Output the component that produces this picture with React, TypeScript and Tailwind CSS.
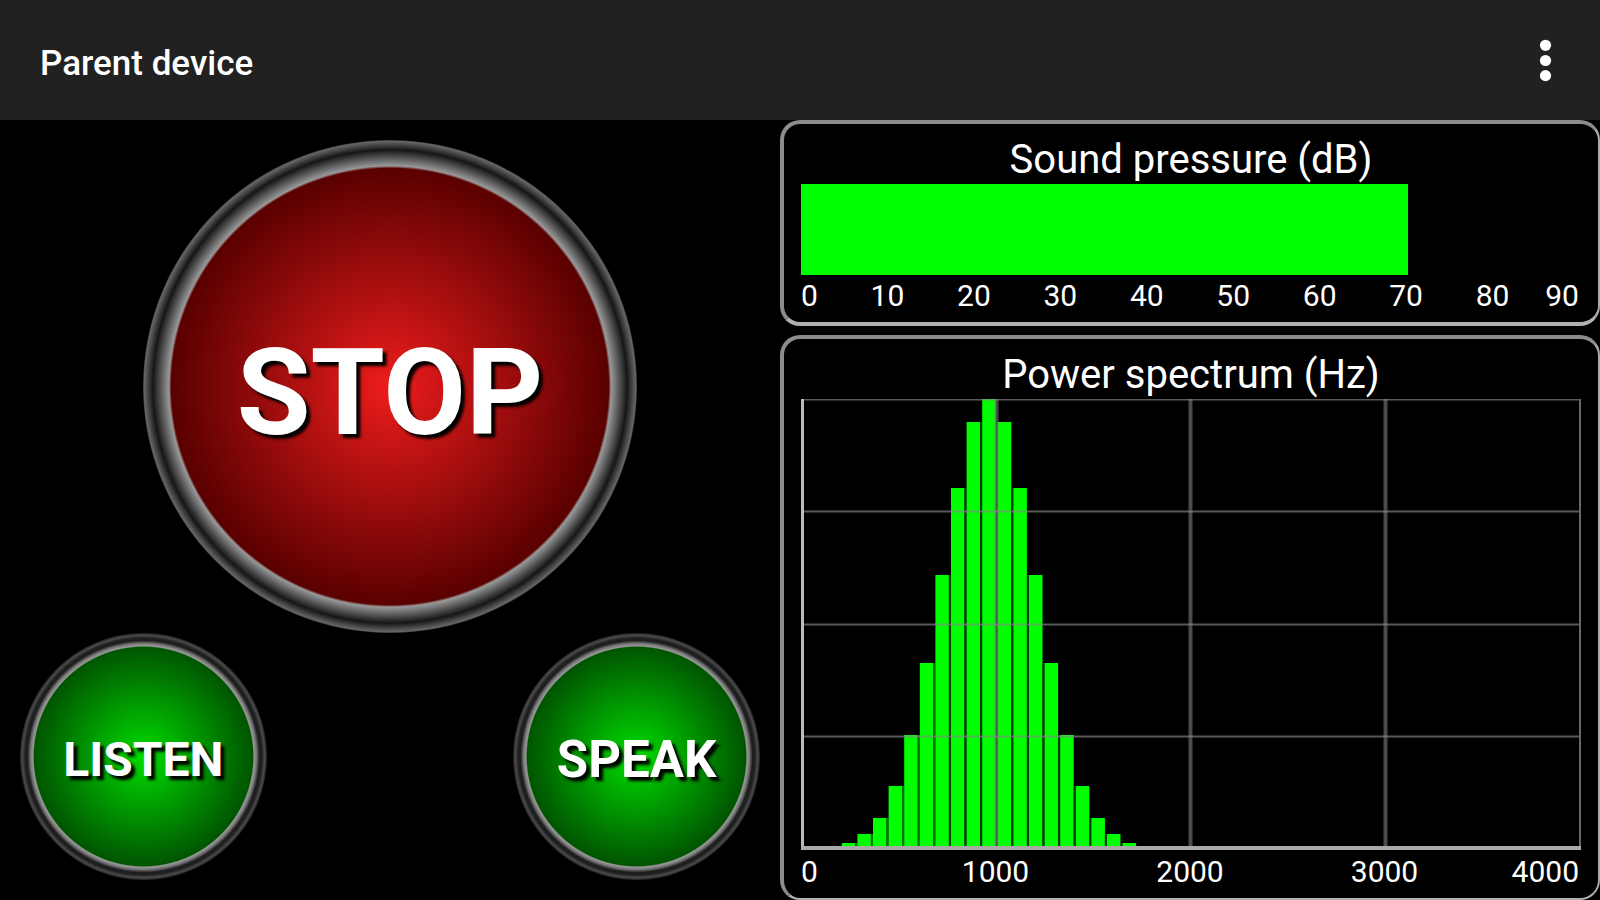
import clsx from 'clsx';

type RoundButtonProps = {
  label: string;
  color: 'red' | 'green';
  textStyle: string;
};

type ScaleProps = {
  values: number[];
};

const soundLevel = 70;
const maxSoundLevel = 90;
const soundScale = [0, 10, 20, 30, 40, 50, 60, 70, 80, 90];
const frequencyScale = [0, 1000, 2000, 3000, 4000];

// Height of each frequency bin, starting at the third one
const firstBin = 3;
const spectrum = [6, 15, 31, 63, 114, 186, 274, 361, 427, 451, 427, 361, 274, 186, 114, 63, 31, 15, 6];

const chartWidth = 780;
const chartHeight = 452;
const binWidth = 15.6;

const RoundButton: React.FC<RoundButtonProps> = ({ label, color, textStyle }) => (
  <button
    className={clsx(
      'flex aspect-square h-full items-center justify-center rounded-full leading-none font-bold text-white [text-shadow:4px_4px_3px_#000]',
      textStyle,
      color === 'red'
        ? 'bg-[radial-gradient(closest-side,#ee1c1c_0%,#5a0000_88.5%,#999_89.5%,#666_92%,#161616_96%,#666_99.5%,#333_100%)]'
        : 'bg-[radial-gradient(closest-side,#00dc00_0%,#005500_88.5%,#999_89.5%,#777_91.5%,#1c1c1c_94%,#222_96%,#4a4a4a_98%,#222_100%)]'
    )}
  >
    {label}
  </button>
);

// Outer labels stay inside the scale, the others are centered on their mark
const Scale: React.FC<ScaleProps> = ({ values }) => (
  <div className="flex justify-between pr-0.5 text-3xl leading-[41px]">
    {values.map((value, index) => (
      <span
        key={value}
        className={clsx(
          'flex w-0',
          index === 0 ? 'justify-start' : index === values.length - 1 ? 'justify-end' : 'justify-center'
        )}
      >
        {value}
      </span>
    ))}
  </div>
);

function SpectrumChart() {
  return (
    <svg
      className="block min-h-0 w-full flex-1"
      viewBox={`0 0 ${chartWidth} ${chartHeight}`}
      preserveAspectRatio="none"
      role="img"
      aria-label="Power spectrum"
    >
      {spectrum.map((height, index) => {
        const x = (index + firstBin) * binWidth - 6;
        const y = chartHeight - 2 - height;
        const overlap = Math.min(height, spectrum[index + 1] ?? 0);
        return (
          <g key={index}>
            <rect x={x} y={y} width={13.5} height={height} fill="#00ff00" />
            {/* Neighbouring bars bleed into the gap between them */}
            <rect
              x={x + 13.5}
              y={chartHeight - 2 - overlap}
              width={2.1}
              height={overlap}
              fill={index < 6 ? '#007800' : '#003c00'}
            />
          </g>
        );
      })}
      {[0.5, 112.5, 225.5, 337.5].map((y) => (
        <line key={y} x1={0} x2={chartWidth} y1={y} y2={y} stroke="#888" strokeOpacity={0.65} strokeWidth={2} />
      ))}
      {[195.5, 389.5, 584.5].map((x) => (
        <line key={x} x1={x} x2={x} y1={0} y2={449} stroke="#888" strokeOpacity={0.55} strokeWidth={4} />
      ))}
      <line x1={779} x2={779} y1={0} y2={451} stroke="#666" strokeWidth={2} />
      <line x1={1.5} x2={1.5} y1={0} y2={451} stroke="#bbb" strokeWidth={3} />
      <line x1={0} x2={chartWidth} y1={449} y2={449} stroke="#aaa" strokeWidth={4} />
    </svg>
  );
}

const panelStyle =
  'flex flex-col rounded-[20px] border-4 border-r-2 border-t-[#8c8c8c] border-r-[#aaa] border-b-[#b0b0b0] border-l-[#8c8c8c] bg-black px-[17px] pt-3 pb-1.5';

export default function App() {
  return (
    <div className="flex h-screen flex-col bg-black font-[Roboto,sans-serif] text-white">
      <header className="flex h-[120px] shrink-0 items-center justify-between bg-[#212121] px-10">
        <h1 className="pt-2 text-[35px] font-medium">Parent device</h1>
        <button aria-label="More options">
          <svg className="h-12 w-[30px]" viewBox="0 0 30 48" fill="#fff">
            <circle cx="15.5" cy="9.3" r="5.6" />
            <circle cx="15.5" cy="24.5" r="5.6" />
            <circle cx="15.5" cy="39.6" r="5.6" />
          </svg>
        </button>
      </header>
      <main className="flex min-h-0 flex-1">
        <section className="grid aspect-square grid-rows-[minmax(0,2fr)_minmax(0,1fr)] p-5">
          <div className="flex justify-center">
            <RoundButton label="STOP" color="red" textStyle="pt-3 text-[120px]" />
          </div>
          <div className="flex justify-between">
            <RoundButton label="LISTEN" color="green" textStyle="pt-1.5 text-[48px]" />
            <RoundButton label="SPEAK" color="green" textStyle="pt-1.5 text-[51px]" />
          </div>
        </section>
        <div className="flex min-w-0 flex-1 flex-col gap-[9px]">
          <section className={panelStyle}>
            <h2 className="text-center text-[40px] leading-12">Sound pressure (dB)</h2>
            <div className="h-[91px]">
              <div className="h-full bg-[#00ff00]" style={{ width: `${(soundLevel / maxSoundLevel) * 100}%` }} />
            </div>
            <Scale values={soundScale} />
          </section>
          <section className={clsx(panelStyle, 'min-h-0 flex-1 border-b-2')}>
            <h2 className="text-center text-[40px] leading-12">Power spectrum (Hz)</h2>
            <SpectrumChart />
            <Scale values={frequencyScale} />
          </section>
        </div>
      </main>
    </div>
  );
}
